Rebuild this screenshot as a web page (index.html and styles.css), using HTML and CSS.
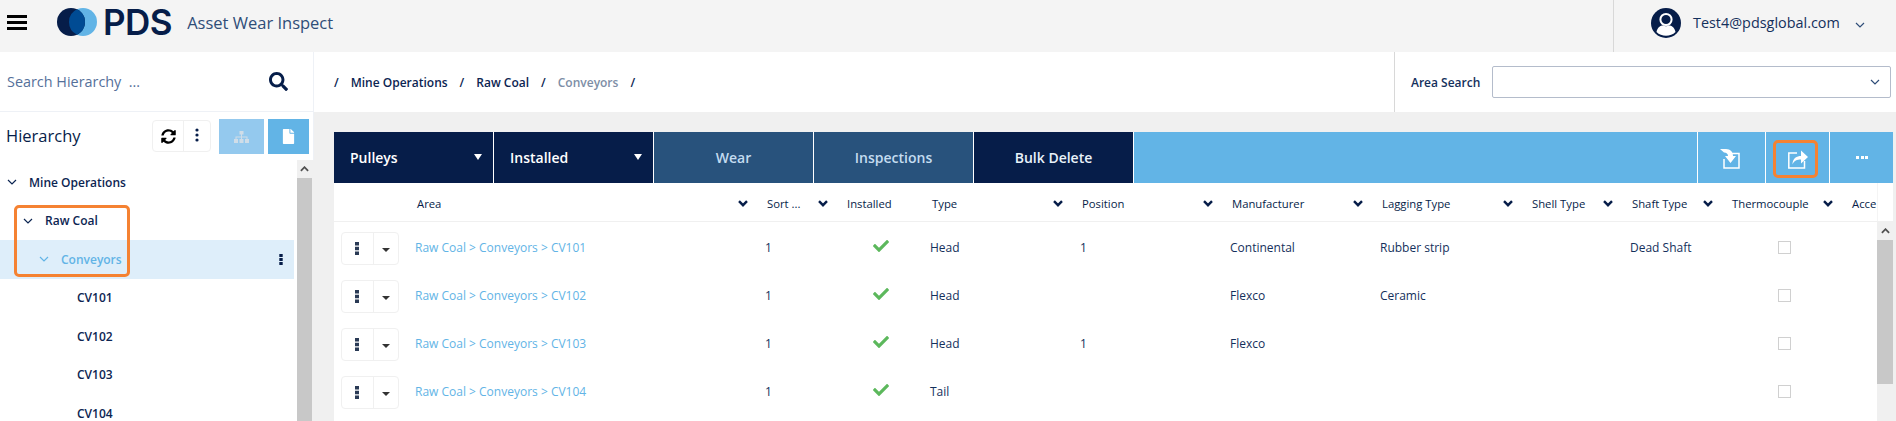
FILE: index.html
```html
<!DOCTYPE html>
<html lang="en">
<head>
<meta charset="utf-8">
<title>Asset Wear Inspect</title>
<link rel="stylesheet" href="styles.css">
</head>
<body>
<svg class="defs" width="0" height="0" aria-hidden="true">
  <symbol id="chev" viewBox="0 0 10 6"><path d="M1 1l4 4 4-4" fill="none" stroke="currentColor" stroke-width="1.2"/></symbol>
  <symbol id="chev-b" viewBox="0 0 10 7"><path d="M1 1.2l4 4 4-4" fill="none" stroke="currentColor" stroke-width="2.4"/></symbol>
  <symbol id="check" viewBox="0 0 512 512"><path fill="currentColor" d="M173.898 439.404l-166.4-166.4c-9.997-9.997-9.997-26.206 0-36.204l36.203-36.204c9.997-9.998 26.207-9.998 36.204 0L192 312.69 432.095 72.596c9.997-9.997 26.207-9.997 36.204 0l36.203 36.204c9.997 9.997 9.997 26.206 0 36.204l-294.4 294.401c-9.998 9.997-26.207 9.997-36.204-.001z"/></symbol>
  <symbol id="kebab" viewBox="0 0 4 13"><path fill="currentColor" d="M0 0h4v3.4H0zM0 4.8h4v3.4H0zM0 9.6h4V13H0z"/></symbol>
</svg>
<div class="app">
  <header class="topbar">
    <svg class="burger" viewBox="0 0 20 15"><path d="M0 0h20v3H0zM0 6h20v3H0zM0 12h20v3H0z"/></svg>
    <div class="brand">
      <svg class="brand-mark" width="40" height="28" viewBox="0 0 40 28">
        <circle cx="26" cy="14" r="14" fill="#62b4e6"/>
        <circle cx="14" cy="14" r="14" fill="#061d49"/>
        <path d="M20 1.35a14 14 0 0 1 0 25.3a14 14 0 0 1 0-25.3z" fill="#004b93"/>
      </svg>
      <span class="brand-name">PDS</span>
    </div>
    <span class="app-title">Asset Wear Inspect</span>
    <div class="user">
      <svg class="avatar" viewBox="0 0 30 30">
        <circle cx="15" cy="15" r="15" fill="#061d49"/>
        <circle cx="15" cy="11.5" r="5.6" fill="none" stroke="#fff" stroke-width="2"/>
        <path d="M5.5 24c1-5 4-6.5 6.5-6.5 2 1 4 1 6 0 2.500 0 5.500 1.500 6.500 6.500-2.500 2.500-6 3.700-9.500 3.700S8 26.500 5.500 24z" fill="#fff"/>
      </svg>
      <span class="user-name">Test4@pdsglobal.com</span>
      <svg class="user-chev"><use href="#chev"/></svg>
    </div>
  </header>

  <div class="workspace">
    <aside class="sidebar">
      <div class="side-search">
        <span class="side-search-text">Search Hierarchy &nbsp;...</span>
        <svg class="side-search-icon" viewBox="0 0 512 512"><path fill="currentColor" d="M505 442.7L405.3 343c-4.5-4.5-10.6-7-17-7H372c27.6-35.3 44-79.7 44-128C416 93.1 322.9 0 208 0S0 93.1 0 208s93.1 208 208 208c48.3 0 92.7-16.4 128-44v16.3c0 6.4 2.5 12.5 7 17l99.7 99.700c9.400 9.400 24.600 9.400 33.900 0l28.300-28.300c9.400-9.400 9.400-24.600.1-34zM208 336c-70.700 0-128-57.200-128-128 0-70.700 57.200-128 128-128 70.700 0 128 57.200 128 128 0 70.700-57.200 128-128 128z"/></svg>
      </div>
      <div class="side-head">
        <h2 class="side-title">Hierarchy</h2>
        <div class="btn-group">
          <span class="btn-group-cell">
            <svg class="sync" viewBox="0 0 512 512"><path fill="currentColor" d="M370.72 133.28C339.458 104.008 298.888 87.962 255.848 88c-77.458.068-144.328 53.178-162.791 126.85-1.344 5.363-6.122 9.15-11.651 9.15H24.103c-7.498 0-13.194-6.807-11.807-14.176C33.933 94.924 134.813 8 256 8c66.448 0 126.791 26.136 171.315 68.685L463.03 40.97C478.149 25.851 504 36.559 504 57.941V192c0 13.255-10.745 24-24 24H345.941c-21.382 0-32.09-25.851-16.971-40.971l41.75-41.749zM32 296h134.059c21.382 0 32.09 25.851 16.971 40.971l-41.75 41.75c31.262 29.273 71.835 45.319 114.876 45.28 77.418-.07 144.315-53.144 162.787-126.849 1.344-5.363 6.122-9.15 11.651-9.15h57.304c7.498 0 13.194 6.807 11.807 14.176C478.067 417.076 377.187 504 256 504c-66.448 0-126.791-26.136-171.315-68.685L48.97 471.03C33.851 486.149 8 475.441 8 454.059V320c0-13.255 10.745-24 24-24z"/></svg>
          </span>
          <span class="btn-group-cell btn-group-cell-narrow">
            <svg class="dots" viewBox="0 0 4 14"><circle cx="2" cy="2" r="1.600"/><circle cx="2" cy="7" r="1.600"/><circle cx="2" cy="12" r="1.600"/></svg>
          </span>
        </div>
        <span class="side-btn side-btn-muted">
          <svg class="sitemap" viewBox="0 0 15 12"><path fill="currentColor" d="M5.500 0h4v3.500h-4zM7 3.500h1V5.500h5.500V8h-1V6.500H8V8H7V6.500H2.500V8h-1V5.500H7zM0 8h4v4H0zM5.500 8h4v4h-4zM11 8h4v4h-4z"/></svg>
        </span>
        <span class="side-btn">
          <svg class="file" viewBox="0 0 384 512"><path fill="currentColor" d="M224 136V0H24C10.700 0 0 10.700 0 24v464c0 13.300 10.700 24 24 24h336c13.300 0 24-10.700 24-24V160H248c-13.200 0-24-10.800-24-24zm160-14.100v6.100H256V0h6.100c6.400 0 12.500 2.500 17 7l97.900 98c4.500 4.500 7 10.600 7 16.900z"/></svg>
        </span>
      </div>
      <div class="tree-wrap">
        <ul class="tree">
          <li class="node lvl0"><svg class="node-chev"><use href="#chev"/></svg>Mine Operations</li>
          <li class="node lvl1"><svg class="node-chev"><use href="#chev"/></svg>Raw Coal</li>
          <li class="node lvl2 node-active"><svg class="node-chev"><use href="#chev"/></svg>Conveyors<svg class="node-kebab"><use href="#kebab"/></svg></li>
          <li class="node lvl3">CV101</li>
          <li class="node lvl3">CV102</li>
          <li class="node lvl3">CV103</li>
          <li class="node lvl3">CV104</li>
        </ul>
        <div class="vscroll vscroll-tree">
          <div class="vscroll-up"><svg viewBox="0 0 10 6"><path d="M1 5l4-4 4 4" fill="none" stroke="#505050" stroke-width="2"/></svg></div>
          <div class="vscroll-thumb"></div>
        </div>
      </div>
      <div class="callout callout-tree"></div>
    </aside>

    <main class="main">
      <div class="crumbbar">
        <nav class="crumbs">
          <span class="crumb-sep">/</span><span>Mine Operations</span>
          <span class="crumb-sep">/</span><span>Raw Coal</span>
          <span class="crumb-sep">/</span><span class="crumb-current">Conveyors</span>
          <span class="crumb-sep">/</span>
        </nav>
        <div class="area-search">
          <span class="area-label">Area Search</span>
          <div class="area-select"><svg class="area-chev"><use href="#chev"/></svg></div>
        </div>
      </div>

      <div class="content">
        <div class="toolbar">
          <div class="tb tb-dark tb-drop">Pulleys<span class="tb-caret"></span></div>
          <div class="tb tb-dark tb-drop">Installed<span class="tb-caret"></span></div>
          <div class="tb tb-mid">Wear</div>
          <div class="tb tb-mid">Inspections</div>
          <div class="tb tb-dark tb-center">Bulk Delete</div>
          <div class="tb-fill"></div>
          <div class="tb-icon tb-icon-wide">
            <svg class="tb-svg" viewBox="0 0 20 20">
              <path d="M9 4.500h10V19H4V10" fill="none" stroke="#fff" stroke-width="1.500"/>
              <path d="M0 0h6c4.500 0 7 3 7 7h3l-5.500 7L5 7h3c0-2-1.500-3.500-4-3.500z" fill="#fff"/>
            </svg>
          </div>
          <div class="tb-icon">
            <svg class="tb-svg" viewBox="0 0 20 20">
              <path d="M9 4H.800v15H16.500v-7" fill="none" stroke="#fff" stroke-width="1.500"/>
              <path d="M4.500 15.500C4.500 9 9 7 13 7V1.500L20 8l-7 6.500V10.500c-4 0-7 1-8.500 5z" fill="#fff"/>
            </svg>
          </div>
          <div class="tb-icon"><span class="tb-more"></span></div>
          <div class="callout callout-export"></div>
        </div>

        <div class="grid-head">
          <div class="row-grid">
            <div></div>
            <div class="th">Area<svg class="th-chev"><use href="#chev-b"/></svg></div>
            <div class="th">Sort ...<svg class="th-chev"><use href="#chev-b"/></svg></div>
            <div class="th">Installed</div>
            <div class="th">Type<svg class="th-chev"><use href="#chev-b"/></svg></div>
            <div class="th">Position<svg class="th-chev"><use href="#chev-b"/></svg></div>
            <div class="th">Manufacturer<svg class="th-chev"><use href="#chev-b"/></svg></div>
            <div class="th">Lagging Type<svg class="th-chev"><use href="#chev-b"/></svg></div>
            <div class="th">Shell Type<svg class="th-chev"><use href="#chev-b"/></svg></div>
            <div class="th">Shaft Type<svg class="th-chev"><use href="#chev-b"/></svg></div>
            <div class="th">Thermocouple<svg class="th-chev"><use href="#chev-b"/></svg></div>
            <div class="th th-clip">Acce</div>
          </div>
        </div>

        <div class="grid-body">
          <div class="rows">
            <div class="row-grid data-row">
              <div class="td-act"><div class="act"><span class="act-a"><svg class="act-kebab"><use href="#kebab"/></svg></span><span class="act-b"><i class="act-caret"></i></span></div></div>
              <div class="td td-link">Raw Coal &gt; Conveyors &gt; CV101</div>
              <div class="td">1</div>
              <div class="td-check"><svg class="ok"><use href="#check"/></svg></div>
              <div class="td">Head</div>
              <div class="td">1</div>
              <div class="td">Continental</div>
              <div class="td">Rubber strip</div>
              <div class="td"></div>
              <div class="td">Dead Shaft</div>
              <div class="td-box"><span class="box"></span></div>
              <div class="td"></div>
            </div>
            <div class="row-grid data-row">
              <div class="td-act"><div class="act"><span class="act-a"><svg class="act-kebab"><use href="#kebab"/></svg></span><span class="act-b"><i class="act-caret"></i></span></div></div>
              <div class="td td-link">Raw Coal &gt; Conveyors &gt; CV102</div>
              <div class="td">1</div>
              <div class="td-check"><svg class="ok"><use href="#check"/></svg></div>
              <div class="td">Head</div>
              <div class="td"></div>
              <div class="td">Flexco</div>
              <div class="td">Ceramic</div>
              <div class="td"></div>
              <div class="td"></div>
              <div class="td-box"><span class="box"></span></div>
              <div class="td"></div>
            </div>
            <div class="row-grid data-row">
              <div class="td-act"><div class="act"><span class="act-a"><svg class="act-kebab"><use href="#kebab"/></svg></span><span class="act-b"><i class="act-caret"></i></span></div></div>
              <div class="td td-link">Raw Coal &gt; Conveyors &gt; CV103</div>
              <div class="td">1</div>
              <div class="td-check"><svg class="ok"><use href="#check"/></svg></div>
              <div class="td">Head</div>
              <div class="td">1</div>
              <div class="td">Flexco</div>
              <div class="td"></div>
              <div class="td"></div>
              <div class="td"></div>
              <div class="td-box"><span class="box"></span></div>
              <div class="td"></div>
            </div>
            <div class="row-grid data-row">
              <div class="td-act"><div class="act"><span class="act-a"><svg class="act-kebab"><use href="#kebab"/></svg></span><span class="act-b"><i class="act-caret"></i></span></div></div>
              <div class="td td-link">Raw Coal &gt; Conveyors &gt; CV104</div>
              <div class="td">1</div>
              <div class="td-check"><svg class="ok"><use href="#check"/></svg></div>
              <div class="td">Tail</div>
              <div class="td"></div>
              <div class="td"></div>
              <div class="td"></div>
              <div class="td"></div>
              <div class="td"></div>
              <div class="td-box"><span class="box"></span></div>
              <div class="td"></div>
            </div>
          </div>
          <div class="vscroll vscroll-grid">
            <div class="vscroll-up"><svg viewBox="0 0 10 6"><path d="M1 5l4-4 4 4" fill="none" stroke="#505050" stroke-width="2"/></svg></div>
            <div class="vscroll-thumb"></div>
          </div>
        </div>
      </div>
    </main>
  </div>
</div>
</body>
</html>
```

FILE: styles.css
```css
* { box-sizing: border-box; }
html, body { margin: 0; height: 100%; overflow: hidden; }
body { font-family: "Open Sans", "Liberation Sans", sans-serif; color: #061d49; background: #f0f0f0; }
.defs { position: absolute; }
.app { height: 421px; display: flex; flex-direction: column; overflow: hidden; }

/* top bar */
.topbar { height: 52px; flex: none; background: #f4f4f4; display: flex; align-items: center; padding-left: 7px; }
.burger { width: 20px; height: 15px; margin-top: -8px; fill: #000; }
.brand { display: flex; align-items: center; margin-left: 30px; margin-top: -8px; }
.brand-mark { display: block; }
.brand-name { font-family: Inter, "Liberation Sans", sans-serif; font-weight: 600; font-size: 35px; line-height: 28px; margin-left: 6px; letter-spacing: -0.5px; color: #061d49; }
.app-title { font-size: 16.5px; color: #2f4d78; margin-left: 15px; margin-top: -7px; }
.user { margin-left: auto; width: 283px; height: 52px; border-left: 1px solid #d8d8d8; display: flex; align-items: center; padding-left: 37px; }
.avatar { width: 30px; height: 30px; margin-top: -7px; flex: none; }
.user-name { font-size: 14.4px; margin-left: 12px; margin-top: -7px; color: #14305c; }
.user-chev { width: 10px; height: 6px; margin-left: 15px; margin-top: -2px; color: #2f4d78; }

/* sidebar */
.workspace { flex: 1; display: flex; min-height: 0; }
.sidebar { width: 314px; flex: none; background: #fff; position: relative; display: flex; flex-direction: column; }
.side-search { height: 60px; flex: none; border-bottom: 1px solid #eef1f6; border-right: 1px solid #eef1f6; display: flex; align-items: center; padding: 0 25px 0 7px; justify-content: space-between; }
.side-search-text { font-size: 14.4px; color: #55709a; }
.side-search-icon { width: 19px; height: 19px; color: #061d49; }
.side-head { height: 48px; flex: none; display: flex; align-items: flex-start; padding: 7px 0 0 6px; border-right: 1px solid #eef1f6; }
.side-title { margin: 5px 0 0; font-size: 16.5px; font-weight: 500; line-height: 24px; width: 146px; color: #061d49; }
.btn-group { width: 59px; height: 32px; margin-top: 1px; border: 1px solid #f0f0f0; border-radius: 4px; display: flex; }
.btn-group-cell { width: 31px; display: flex; align-items: center; justify-content: center; border-right: 1px solid #f0f0f0; }
.btn-group-cell-narrow { flex: 1; border-right: 0; }
.sync { width: 15px; height: 15px; color: #000; }
.dots { width: 4px; height: 14px; fill: #061d49; margin-top: -3px; }
.side-btn { width: 41px; height: 35px; margin-left: 4px; background: #62b4e6; display: flex; align-items: center; justify-content: center; }
.side-btn-muted { width: 45px; margin-left: 8px; background: #94c9ee; }
.sitemap { width: 15px; height: 12px; color: #d0dde8; }
.file { width: 13px; height: 15px; color: #fff; }
.tree-wrap { flex: 1; display: flex; min-height: 0; border-right: 2px solid #f0f0f0; }
.tree { list-style: none; margin: 0; padding: 3px 0 0; width: 294px; flex: none; }
.node { height: 38.5px; display: flex; align-items: center; font-size: 12px; font-weight: 600; color: #0c2552; }
.lvl0 { padding-left: 7px; }
.lvl1 { padding-left: 23px; }
.lvl2 { padding-left: 39px; }
.lvl3 { padding-left: 77px; }
.node-chev { width: 10px; height: 6px; margin-right: 12px; flex: none; }
.node-active { background: #deeefa; color: #62b4e6; }
.node-kebab { width: 4px; height: 11px; margin-left: auto; margin-right: 11px; color: #061d49; }
.vscroll { flex: none; display: flex; flex-direction: column; }
.vscroll-up { height: 18px; background: #f0f0f0; display: flex; align-items: center; justify-content: center; }
.vscroll-up svg { width: 9px; height: 6px; }
.vscroll-thumb { background: #c8c8c8; }
.vscroll-tree { width: 15px; margin-left: 3px; }
.vscroll-tree .vscroll-thumb { flex: 1; }
.vscroll-grid { width: 16px; background: #f0f0f0; }
.vscroll-grid .vscroll-thumb { height: 144px; }

/* callouts */
.callout { position: absolute; border: 3px solid #f58232; border-radius: 5px; pointer-events: none; }
.callout-tree { left: 14px; top: 153px; width: 116px; height: 72px; }
.callout-export { left: 1439px; top: 8px; width: 45px; height: 38px; }

/* main */
.main { flex: 1; min-width: 0; display: flex; flex-direction: column; }
.crumbbar { height: 60px; flex: none; background: #fff; display: flex; align-items: center; }
.crumbs { flex: 1; display: flex; align-items: center; gap: 12px; padding-left: 20px; font-size: 12px; font-weight: 600; color: #0c2552; }
.crumb-current { color: #7d8ea6; }
.area-search { width: 502px; height: 60px; border-left: 1px solid #d8d8d8; display: flex; align-items: center; padding-left: 16px; }
.area-label { font-size: 12px; font-weight: 600; color: #14305c; width: 81px; white-space: nowrap; }
.area-select { width: 399px; height: 32px; border: 1px solid #b4bccb; border-radius: 2px; background: #fff; display: flex; align-items: center; justify-content: flex-end; padding-right: 10px; }
.area-chev { width: 10px; height: 6px; color: #2f4d78; }

.content { flex: 1; min-height: 0; padding: 20px 3px 0 20px; display: flex; flex-direction: column; }
.toolbar { height: 51px; flex: none; display: flex; background: #62b4e6; position: relative; }
.tb { width: 160px; flex: none; border-right: 1px solid #fff; display: flex; align-items: center; font-size: 14px; font-weight: 600; }
.tb-dark { background: #061d49; color: #fff; }
.tb-mid { background: #28527c; color: #c4dcf0; justify-content: center; }
.tb-center { justify-content: center; color: #e8f2fa; }
.tb-drop { padding-left: 16px; position: relative; }
.tb-caret { position: absolute; right: 11px; top: 22px; border-left: 4.500px solid transparent; border-right: 4.500px solid transparent; border-top: 6px solid #fff; }
.tb-fill { flex: 1; }
.tb-icon { width: 64px; flex: none; border-left: 1px solid #fff; display: flex; align-items: center; justify-content: center; }
.tb-icon-wide { width: 68px; padding-right: 4px; }
.tb-svg { width: 20px; height: 20px; margin-top: 3px; }
.tb-more { width: 12px; height: 3px; margin-top: -1px; background: repeating-linear-gradient(90deg, #fff 0 3px, transparent 3px 4.500px); }

/* table */
.row-grid { display: grid; grid-template-columns: 81px 350px 80px 85px 150px 150px 150px 150px 100px 100px 120px 27px; }
.grid-head { height: 39px; flex: none; background: #fff; border-bottom: 1px solid #f0f0f0; }
.grid-head .row-grid { height: 100%; width: 1543px; border-right: 1px solid #f4f4f4; box-sizing: content-box; }
.th { display: flex; align-items: center; justify-content: space-between; font-size: 11.3px; padding: 2px 17px 0 2px; color: #061d49; font-weight: 500; white-space: nowrap; }
.th-clip { padding: 2px 0 0 2px; justify-content: flex-start; }
.th-chev { width: 10px; height: 7px; flex: none; }
.grid-body { flex: 1; min-height: 0; background: #fff; display: flex; justify-content: space-between; }
.rows { padding-top: 2px; width: 1543px; }
.data-row { height: 48px; align-items: center; }
.td { font-size: 12px; color: #14305c; white-space: nowrap; padding-bottom: 2px; }
.td-link { color: #62b4e6; }
.td-check { padding-left: 28px; height: 16px; margin-top: -5px; }
.ok { width: 16px; height: 16px; color: #5cb85c; display: block; }
.td-box { padding-left: 48px; height: 13px; margin-top: -2px; }
.box { display: block; width: 13px; height: 13px; border: 1px solid #d0d0d0; }
.td-act { padding-left: 6.500px; }
.act { width: 58px; height: 33px; border: 1px solid #f0f0f0; border-radius: 4px; display: flex; }
.act-a { width: 32px; border-right: 1px solid #f0f0f0; display: flex; align-items: center; justify-content: center; }
.act-b { flex: 1; display: flex; align-items: center; justify-content: center; }
.act-kebab { width: 4px; height: 13px; color: #2a3a55; }
.act-caret { display: block; margin-top: 3px; border-left: 4px solid transparent; border-right: 4px solid transparent; border-top: 4px solid #333; }
```
